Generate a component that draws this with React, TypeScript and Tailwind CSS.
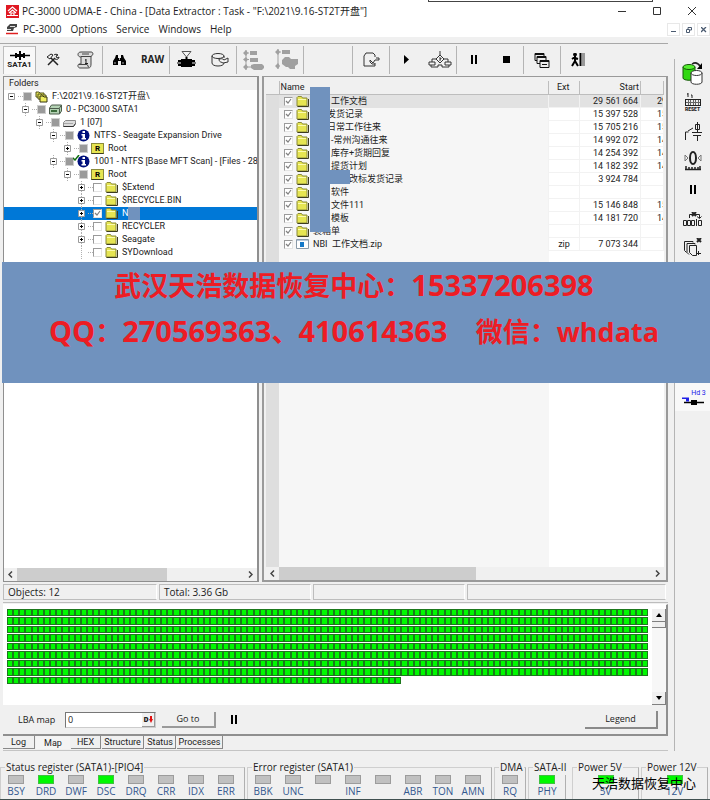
import { ReactNode } from "react"
import clsx from "clsx"

type NodeIcon = "task" | "drive" | "partition" | "info" | "root" | "folder"

type TreeNode = {
  depth: number
  icon: NodeIcon
  label: string
  open?: boolean
  leaf?: boolean
  state: "mixed" | "on" | "off"
  flagged?: boolean
  selected?: boolean
}

const tree: TreeNode[] = [
  { depth: 0, icon: "task", label: "F:\\2021\\9.16-ST2T开盘\\", open: true, state: "mixed" },
  { depth: 1, icon: "drive", label: "0 - PC3000 SATA1", open: true, state: "mixed" },
  { depth: 2, icon: "partition", label: "1 [07]", open: true, state: "mixed" },
  { depth: 3, icon: "info", label: "NTFS - Seagate Expansion Drive", open: true, state: "mixed" },
  { depth: 4, icon: "root", label: "Root", state: "mixed" },
  { depth: 3, icon: "info", label: "1001 - NTFS [Base MFT Scan] - [Files - 2897", open: true, state: "mixed", flagged: true },
  { depth: 4, icon: "root", label: "Root", open: true, state: "mixed" },
  { depth: 5, icon: "folder", label: "$Extend", state: "off" },
  { depth: 5, icon: "folder", label: "$RECYCLE.BIN", state: "off" },
  { depth: 5, icon: "folder", label: "N", state: "on", selected: true },
  { depth: 5, icon: "folder", label: "RECYCLER", state: "off" },
  { depth: 5, icon: "folder", label: "Seagate", state: "off" },
  { depth: 5, icon: "folder", label: "SYDownload", state: "off", leaf: true },
]

const files = [
  { name: "工作文档", indent: "ml-[18px]", ext: "", start: "29 561 664", next: "29" },
  { name: "发货记录", indent: "ml-[14px]", ext: "", start: "15 397 528", next: "15" },
  { name: "日常工作往来", indent: "ml-[14px]", ext: "", start: "15 705 216", next: "15" },
  { name: "-常州沟通往来", indent: "ml-[18px]", ext: "", start: "14 992 072", next: "14" },
  { name: "库存+货期回复", indent: "ml-[18px]", ext: "", start: "14 254 392", next: "14" },
  { name: "提货计划", indent: "ml-[18px]", ext: "", start: "14 182 392", next: "14" },
  { name: "改标发货记录", indent: "ml-9", ext: "", start: "3 924 784", next: "" },
  { name: "软件", indent: "ml-[18px]", ext: "", start: "", next: "" },
  { name: "文件111", indent: "ml-[18px]", ext: "", start: "15 146 848", next: "15" },
  { name: "模板", indent: "ml-[18px]", ext: "", start: "14 181 720", next: "14" },
  { name: "装箱单", indent: "", ext: "", start: "", next: "" },
  { name: "NBI  工作文档.zip", indent: "", ext: "zip", start: "7 073 344", next: "" },
]

const statusBits = [
  { name: "BSY" }, { name: "DRD", on: true }, { name: "DWF" }, { name: "DSC", on: true },
  { name: "DRQ" }, { name: "CRR" }, { name: "IDX" }, { name: "ERR" },
]
const errorBits = [
  { name: "BBK" }, { name: "UNC" }, { name: "" }, { name: "INF" },
  { name: "" }, { name: "ABR" }, { name: "TON" }, { name: "AMN" },
]

const MAP_CELLS = 8 * 104 + 64

/* ---------- small icons ---------- */

const FolderIcon = () => (
  <svg width="13" height="11" viewBox="0 0 13 11" className="shrink-0">
    <path d="M1 3V1.500L2 .5h3.500l1 1.500H11v8H1z" fill="#e6e552" stroke="#8a8a3a" />
    <path d="M1.500 10.500h11V3" fill="none" stroke="#3c3c20" />
    <path d="M2 3.500h8" stroke="#fbfbb0" />
  </svg>
)

const TreeIcon = ({ icon }: { icon: NodeIcon }) => {
  if (icon === "folder") return <FolderIcon />
  if (icon === "task")
    return (
      <svg width="13" height="12" viewBox="0 0 13 12" className="shrink-0">
        <path d="M1 6V1h3l1 1h4v5z" fill="#e6e552" stroke="#555520" />
        <path d="M3 8V3h3l1 1h4v5z" fill="#e6e552" stroke="#555520" />
        <path d="M5 11V5h3l1 1h3v5z" fill="#f0ee60" stroke="#333310" />
      </svg>
    )
  if (icon === "drive")
    return (
      <svg width="13" height="11" viewBox="0 0 13 11" className="shrink-0">
        <path d="M.5 4l2-3h10v6l-2 3H.5z" fill="#b4d2b4" stroke="#4d5d4d" />
        <path d="M.5 4.500h10V10M10.500 4l2-3" fill="none" stroke="#4d5d4d" />
        <path d="M2 7h6" stroke="#3c6c3c" strokeWidth="2" />
      </svg>
    )
  if (icon === "partition")
    return (
      <svg width="13" height="11" viewBox="0 0 13 11" className="shrink-0">
        <path d="M.5 5.500l2-2h10v3l-2 3H.5z" fill="#dcdcdc" stroke="#8a8a8a" />
        <path d="M.5 9.500h10l2-3" fill="none" stroke="#333" />
        <path d="M1 6.500h9" stroke="#a8a8a8" />
      </svg>
    )
  if (icon === "info")
    return (
      <svg width="13" height="13" viewBox="0 0 13 13" className="shrink-0">
        <circle cx="6.500" cy="6.500" r="6" fill="#00107c" />
        <path d="M5.500 2h2.500v2H5.500zM4.500 5H8v4h1v1.500H4.500V9h1V6.500h-1z" fill="#fff" />
      </svg>
    )
  return (
    <span className="flex h-[11px] w-[13px] shrink-0 items-center justify-center border border-[#8a8a3a] border-b-[#3c3c20] bg-[#e6e552] text-[8px] leading-none font-bold text-black">
      R
    </span>
  )
}

const Tick = ({ state, label }: { state: "mixed" | "on" | "off"; label: string }) => (
  <span className="relative flex size-[9px] shrink-0">
    <input
      type="checkbox"
      aria-label={label}
      defaultChecked={state === "on"}
      className={clsx(
        "peer size-[9px] appearance-none border",
        state === "mixed" ? "border-[#cfcfcf] bg-[#9a9a9a]" : "border-r-[#e4e4e4] border-b-[#e4e4e4] border-t-[#9a9a9a] border-l-[#9a9a9a] bg-white",
      )}
    />
    <svg viewBox="0 0 9 9" className="pointer-events-none absolute inset-0 hidden size-[9px] peer-checked:block">
      <path d="M2 4l2 2 3-4" fill="none" stroke="#808080" strokeWidth="1.200" />
    </svg>
  </span>
)

const PauseIcon = () => (
  <svg width="6" height="9" viewBox="0 0 6 9"><path d="M0 0h2v9H0zM4 0h2v9H4z" /></svg>
)

/* ---------- toolbar ---------- */

const ToolButton = ({ label, children, wide }: { label: string; children: ReactNode; wide?: boolean }) => (
  <button aria-label={label} className={clsx("flex h-full items-center justify-center", wide ? "w-9" : "w-[33px]")}>
    {children}
  </button>
)

const ToolGroup = ({ children }: { children?: ReactNode }) => (
  <div className="flex h-7 border-l border-[#b4b4b4]">{children}</div>
)

const Toolbar = () => (
  <div className="mr-[6px] flex h-8 items-center border-t border-[#a8a8a8] pl-[3px]" role="toolbar">
    <button className="flex h-7 w-8 flex-col items-center justify-center border-t border-l border-[#bdbdbd] bg-[#f8f8f8]">
      <svg width="22" height="9" viewBox="0 0 22 9">
        <path d="M1 4.500h20" stroke="#000" strokeWidth="1.500" />
        <path d="M10 0h2v9h-2zM6 2h2v5H6zM14 2h2v5h-2z" />
        <path d="M6 3h10v3H6z" />
      </svg>
      <span className="text-[8px] leading-[9px] font-bold">SATA1</span>
    </button>
    <ToolGroup>
      <ToolButton label="Settings">
        <svg width="14" height="14" viewBox="0 0 14 14" fill="none" stroke="#222" strokeWidth="1.500">
          <path d="M2 12l7-7M12 12L5 5" />
          <path d="M1 4l4-3 2 1-3 4zM8 2c1-1 3-1 4 0l-2 1 1 2 2-1c0 2-2 3-4 2" strokeWidth="1" />
        </svg>
      </ToolButton>
      <ToolButton label="Script">
        <svg width="17" height="18" viewBox="0 0 17 18" fill="#dcdcdc" stroke="#444">
          <path d="M4 1h10c3 0 2 4 0 4v8c0 4-2 4-3 4H3c-2 0-3-3-1-4h2V6C0 6 0 1 4 1z" />
          <path d="M4 5.500h10M2 13.500h8c1 0 1 3 2 3M5 3h7" fill="none" />
          <path d="M9 8v5M8 12.500h3M8 9h1" stroke="#222" fill="none" />
        </svg>
      </ToolButton>
    </ToolGroup>
    <ToolGroup>
      <ToolButton label="Search">
        <svg width="13" height="12" viewBox="0 0 13 12">
          <path d="M3 1h2v3h3V1h2l1 3 2 3v4H8V7H5v4H0V7l2-3z" />
          <path d="M2 8v2M10 8v2M6.500 4v2" stroke="#ddd" strokeWidth=".8" />
        </svg>
      </ToolButton>
      <ToolButton label="Raw recovery">
        <span className="font-['Open_Sans',sans-serif] text-[10px] font-bold">RAW</span>
      </ToolButton>
    </ToolGroup>
    <ToolGroup>
      <ToolButton label="Filter">
        <svg width="19" height="17" viewBox="0 0 19 17">
          <path d="M5 .5h9L9.500 6z" fill="#f4f4f4" stroke="#555" />
          <path d="M9.500 6v3" stroke="#000" strokeWidth="2" />
          <path d="M4 8h11v8H4zM1 9h17v2H1zM1 13h17v2H1z" />
          <path d="M0 12h19" stroke="#000" />
        </svg>
      </ToolButton>
      <ToolButton label="Export">
        <svg width="18" height="15" viewBox="0 0 18 15" fill="none" stroke="#333">
          <path d="M1 4v7c0 4 12 4 12 0M13 6V4" />
          <ellipse cx="7" cy="4" rx="6" ry="2.500" />
          <path d="M8 7c2 0 3-1 5 1l4-2v4l-5 1-2-1c-1 0-2-1-2-3z" fill="#f4f4f4" />
        </svg>
      </ToolButton>
    </ToolGroup>
    <ToolGroup>
      <ToolButton label="Build tree">
        <svg width="22" height="20" viewBox="0 0 22 20" fill="#a0a0a0">
          <path d="M3 0l2 3-2 3-3-3zM3 7l2 2.500L3 12 0 9.500zM3 14l2 3-2 3-3-3z" />
          <path d="M3 0v20M3 3h3M3 9.500h3M3 17h5" stroke="#a0a0a0" />
          <path d="M7 1h7v4H7zM7 8h8v4H7zM8 15l3-1h8l2 2v2l-2 2h-8l-3-2z" />
        </svg>
      </ToolButton>
      <ToolButton label="Stop tree">
        <svg width="24" height="21" viewBox="0 0 24 21" fill="#a0a0a0">
          <path d="M3 0l2 3-2 3-3-3zM3 14l2 3-2 3-3-3z" />
          <path d="M3 0v20M3 3h3" stroke="#a0a0a0" />
          <path d="M7 1h8v4H7zM7 11l3-3h4l2 2h7v5l-3 2v3h-5l-2-2h-2l-4-3z" />
        </svg>
      </ToolButton>
    </ToolGroup>
    <div className="h-7 w-[49px] border-l border-[#b4b4b4]" />
    <ToolGroup>
      <ToolButton label="Save" wide>
        <svg width="17" height="16" viewBox="0 0 17 16" fill="none" stroke="#333">
          <path d="M12 5V3l-2-2H3L1 4v10h11v-3" />
          <path d="M7 8l3 3 2-3h4V6h-3M7 8v2l2 2h3" />
        </svg>
      </ToolButton>
    </ToolGroup>
    <ToolGroup>
      <ToolButton label="Start">
        <svg width="6" height="9" viewBox="0 0 6 9"><path d="M0 0l5 4.500L0 9z" /></svg>
      </ToolButton>
      <ToolButton label="Network">
        <svg width="24" height="17" viewBox="0 0 24 17" fill="#f5f5f5" stroke="#333">
          <path d="M12 0v4M12 4l4 4-4 4-4-4zM8 8H4v3M16 8h4v3" />
          <path d="M1 11h6v3H1zM17 11h6v3h-6zM3 14v2h7v-2h4v2h7v-2" />
          <path d="M11 7h2v1h-1v2" fill="none" />
        </svg>
      </ToolButton>
    </ToolGroup>
    <ToolGroup>
      <ToolButton label="Pause"><PauseIcon /></ToolButton>
      <ToolButton label="Stop"><span className="size-[7px] bg-black" /></ToolButton>
    </ToolGroup>
    <ToolGroup>
      <ToolButton label="Cascade" wide>
        <svg width="16" height="16" viewBox="0 0 16 16" fill="#eee" stroke="#111">
          <path d="M1 1.500h9v7H1z" /><path d="M1 2h9" strokeWidth="2" />
          <path d="M3 4.500h9v7H3z" /><path d="M3 5h9" strokeWidth="2" />
          <path d="M6 8.500h9v7H6z" /><path d="M6 9h9" strokeWidth="2" /><path d="M8 12.500h5" />
        </svg>
      </ToolButton>
    </ToolGroup>
    <ToolGroup>
      <ToolButton label="Exit">
        <svg width="16" height="14" viewBox="0 0 16 14" fill="none" stroke="#000">
          <circle cx="5" cy="1.500" r="1.500" fill="#000" />
          <path d="M5 3v5M5 4L2 6M5 5l3 1M5 8l-3 5M5 8l3 5" strokeWidth="2" />
          <path d="M10.500 0v13" strokeWidth="2" /><path d="M13.500 0v13" stroke="#999" strokeWidth="3" />
        </svg>
      </ToolButton>
    </ToolGroup>
  </div>
)

/* ---------- scrollbars ---------- */

const HScroll = ({ thumb }: { thumb: string }) => (
  <div className="flex h-[13px] shrink-0 items-stretch bg-[#f0f0f0]">
    <button aria-label="Scroll left" className="flex w-[13px] items-center justify-center">
      <svg width="5" height="7" viewBox="0 0 5 7"><path d="M4 .5l-3 3 3 3" fill="none" stroke="#444" strokeWidth="1.500" /></svg>
    </button>
    <div className="flex-1"><div className={clsx("h-full bg-[#cdcdcd]", thumb)} /></div>
    <button aria-label="Scroll right" className="flex w-[13px] items-center justify-center">
      <svg width="5" height="7" viewBox="0 0 5 7"><path d="M1 .5l3 3-3 3" fill="none" stroke="#444" strokeWidth="1.500" /></svg>
    </button>
  </div>
)

/* ---------- panels ---------- */

const TreeRow = ({ node }: { node: TreeNode }) => (
  <li className={clsx("flex h-[13px] items-center whitespace-nowrap", node.selected && "bg-[#0078d7] text-white")}>
    {Array.from({ length: node.depth }, (_, i) => (
      <span key={i} className="w-[14px] shrink-0" />
    ))}
    <span className="relative flex h-full w-[14px] shrink-0 items-center justify-center">
      {node.depth > 0 && <span className="absolute inset-y-0 left-[7px] border-l border-dotted border-[#b0b0b0]" />}
      {!node.leaf && (
        <svg width="7" height="7" viewBox="0 0 7 7" className="relative">
          <path d="M.5.5h6v6h-6z" fill="#fff" stroke="#9a9a9a" />
          <path d={node.open ? "M2 3.500h3" : "M2 3.500h3M3.500 2v3"} stroke="#000" />
        </svg>
      )}
    </span>
    <span className="w-[5px] shrink-0 border-t border-dotted border-[#b0b0b0]" />
    <Tick state={node.state} label={node.label} />
    <span className="relative ml-[3px] flex">
      <TreeIcon icon={node.icon} />
      {node.flagged && (
        <svg width="7" height="6" viewBox="0 0 7 6" className="absolute top-0 -left-1">
          <path d="M0 3l2 2 4-5" fill="none" stroke="#107010" strokeWidth="1.500" />
        </svg>
      )}
    </span>
    <span className="ml-1">{node.label}</span>
    {node.selected && <span className="h-[13px] w-3 bg-[#7092be]" />}
  </li>
)

const FolderPanel = () => (
  <section className="flex w-64 shrink-0 flex-col overflow-hidden border border-r-2 border-[#8f8f8f] bg-white">
    <h2 className="h-[13px] bg-[#f0f0f0] pl-[5px] leading-[13px]">Folders</h2>
    <ul className="flex-1 overflow-hidden">
      {tree.map((node, i) => <TreeRow key={i} node={node} />)}
    </ul>
    <HScroll thumb="w-[66%]" />
  </section>
)

const FilePanel = () => (
  <section className="flex min-w-0 flex-1 flex-col overflow-hidden border-2 border-t border-[#9a9a9a] bg-[#f0f0f0] px-[2px] pt-1">
    <div className="relative min-h-0 flex-1 overflow-hidden">
      <table className="h-full w-full table-fixed border-collapse">
        <colgroup>
          <col className="w-[13px]" />
          <col />
          <col className="w-[31px]" />
          <col className="w-[61px]" />
          <col className="w-[23px]" />
        </colgroup>
        <thead>
          <tr className="h-[13px] bg-[#f0f0f0] text-left leading-[12px] *:border-r *:border-b *:border-[#bdbdbd] *:p-0 *:font-normal">
            <th />
            <th className="pl-px!">Name</th>
            <th className="pl-2!">Ext</th>
            <th className="pr-px! text-right">Start</th>
            <th />
          </tr>
        </thead>
        <tbody>
          {files.map((file, i) => (
            <tr key={file.name} className={clsx("h-[13px] leading-[12px] whitespace-nowrap *:p-0", i === 0 ? "bg-[#e2e2e2]" : "bg-white")}>
              <td className="bg-[#dedede]" />
              <td className={i === 0 ? "bg-[#e2e2e2]" : "bg-[#f6f6f6]"}>
                <div className="flex h-[13px] items-center pl-[5px]">
                  <Tick state="on" label={file.name} />
                  <span className="ml-[3px] flex w-[17px]">
                    {file.ext ? (
                      <svg width="13" height="10" viewBox="0 0 13 10">
                        <path d="M.5.5h12v9H.5z" fill="#fff" stroke="#8a9aa8" />
                        <path d="M1 1h11v1H1z" fill="#b8c8d8" /><path d="M4 3h4v5H4z" fill="#1478c8" />
                      </svg>
                    ) : <FolderIcon />}
                  </span>
                  <span className={clsx("whitespace-pre", file.indent)}>{file.name}</span>
                </div>
              </td>
              <td className="border border-[#f2f2f2] text-center">{file.ext}</td>
              <td className="border border-[#f2f2f2] pr-[2px]! text-right">{file.start}</td>
              <td className="overflow-hidden border border-[#f2f2f2]"><span className="ml-4">{file.next}</span></td>
            </tr>
          ))}
          <tr className="bg-white">
            <td className="bg-[#dedede]" />
            <td className="bg-[#f6f6f6]" />
            <td /><td /><td />
          </tr>
        </tbody>
      </table>
      {/* masked part of the names */}
      <div className="absolute top-[6px] left-11 h-[145px] w-5 bg-[#7092be]" />
      <div className="absolute top-[89px] left-16 h-[14px] w-5 bg-[#7092be]" />
    </div>
    <HScroll thumb="w-[53%]" />
  </section>
)

const MapPanel = () => (
  <section className="border-t border-r-2 border-b-2 border-[#8f8f8f] border-t-white">
    <div className="flex h-[100px] bg-white pt-1 pl-1">
      <div className="mr-1 grid h-[76px] flex-1 grid-cols-[repeat(104,minmax(0,1fr))] grid-rows-9">
        {Array.from({ length: MAP_CELLS }, (_, i) => (
          <span key={i} className="mb-px border border-[#1c781c] bg-[#00f800]" />
        ))}
      </div>
      <div className="flex w-[14px] flex-col bg-[#f7f7f7]">
        <button aria-label="Scroll up" className="flex h-[13px] items-center justify-center border-r border-b border-[#808080] bg-[#f0f0f0]">
          <svg width="6" height="4" viewBox="0 0 6 4"><path d="M0 4l3-4 3 4z" /></svg>
        </button>
        <div className="h-[6px] border-r border-b border-[#808080] bg-[#f0f0f0]" />
        <div className="flex-1" />
        <button aria-label="Scroll down" className="flex h-[13px] items-center justify-center border-r border-b border-[#808080] bg-[#f0f0f0]">
          <svg width="6" height="4" viewBox="0 0 6 4"><path d="M0 0l3 4 3-4z" /></svg>
        </button>
      </div>
    </div>
    <div className="flex h-[29px] items-center pr-2 pl-[15px] font-['Open_Sans',sans-serif]">
      <label htmlFor="lba" className="w-[47px] text-[9px] whitespace-nowrap">LBA map</label>
      <div className="flex h-4 w-[91px] border border-t-[#777] border-r-[#ccc] border-b-[#ccc] border-l-[#777] bg-white">
        <input id="lba" defaultValue="0" className="w-0 flex-1 pl-[2px] text-[9px] leading-none outline-none" />
        <button aria-label="Number base" className="flex w-[13px] items-center justify-center border-r border-b border-[#999] bg-[#f0f0f0] text-[7px] leading-none font-black">
          D
          <svg width="4" height="7" viewBox="0 0 4 7"><path d="M1 0h2v3h1L2 7 0 3h1z" fill="#e01010" /></svg>
        </button>
      </div>
      <button className="ml-[6px] h-4 w-[54px] border-r-2 border-b-2 border-[#9a9a9a] text-[9px] leading-none">Go to</button>
      <button aria-label="Pause map" className="ml-[15px]"><PauseIcon /></button>
      <button className="ml-auto h-[18px] w-[73px] border-r-2 border-b-2 border-[#8a8a8a] text-[9px] leading-none">Legend</button>
    </div>
  </section>
)

const tabs = [
  { name: "Log", width: "w-8" },
  { name: "Map", width: "w-[34px]" },
  { name: "HEX", width: "w-[30px]" },
  { name: "Structure", width: "w-[42px]" },
  { name: "Status", width: "w-[31px]" },
  { name: "Processes", width: "w-[46px]" },
]

const Tabs = () => (
  <div role="tablist" className="flex h-[15px] items-start border-b border-[#c4c4c4]">
    {tabs.map(({ name, width }) => (
      <button
        key={name}
        role="tab"
        aria-selected={name === "Map"}
        className={clsx(
          "mr-px h-[13px] leading-none",
          width,
          name === "Map" ? "bg-[#f4f4f4] pt-[2px]" : "border-r border-b border-[#888]",
        )}
      >
        {name}
      </button>
    ))}
  </div>
)

const Register = ({ title, bits, className }: { title: string; bits: { name: string; on?: boolean }[]; className: string }) => (
  <fieldset className={clsx("h-10 min-w-0 border border-b-0 border-[#cfcfcf] border-r-[#b0b0b0]", className)}>
    <legend className="ml-1 h-4 px-px text-[10px] leading-4 whitespace-nowrap">{title}</legend>
    <div className={clsx("flex", bits.length === 1 && "justify-center")}>
      {bits.map((bit, i) => (
        <div key={i} className="flex w-[30px] shrink-0 flex-col items-center">
          <span className={clsx("h-[9px] w-4 border", bit.on ? "border-[#40c040] bg-[#00f800]" : "border-[#9c9c9c] bg-[#c0c0c0]")} />
          <span className="text-[10px] leading-[14px] text-[#34588f]">{bit.name}</span>
        </div>
      ))}
    </div>
  </fieldset>
)

const sideStroke = { fill: "none", stroke: "#222" }

const SideBar = () => (
  <aside className="flex w-9 shrink-0 flex-col border-l border-[#b4b4b4] *:flex *:h-[29px] *:items-center *:justify-center">
    <button aria-label="Copy drive">
      <svg width="22" height="24" viewBox="0 0 22 24">
        <path d="M1 5v11c0 3 12 3 12 0V5" fill="#30d810" stroke="#155808" />
        <ellipse cx="7" cy="5" rx="6" ry="2.500" fill="#55f030" stroke="#155808" />
        <path d="M9 11v9c0 3 11 3 11 0v-9" fill="#fff" stroke="#333" />
        <ellipse cx="14.500" cy="11" rx="5.500" ry="2.500" fill="#fff" stroke="#333" />
        <path d="M10 2c3-2 6-1 8 2" fill="none" stroke="#222" strokeWidth="1.500" /><path d="M20 1v6h-5z" />
      </svg>
    </button>
    <button aria-label="Reset" className="flex-col">
      <svg width="16" height="13" viewBox="0 0 16 13" {...sideStroke}>
        <path d="M3 0v4M2 1h1M7 2v3M6 2h1M0 6.500h16M0 12.500h16M.5 6v7M15.500 6v7" />
        <path d="M3.500 7v5M5.500 7v5M8.500 7v5M10.500 7v5M13.500 7v5M1 9.500h14" stroke="#666" />
      </svg>
      <span className="text-[5px] leading-[6px] font-black">RESET</span>
    </button>
    <button aria-label="Power circuit">
      <svg width="18" height="19" viewBox="0 0 18 19" {...sideStroke}>
        <path d="M1.500 18v-8h3M4 9l5-3M8 10.500h10M9 13.500h8M13.500 13v6M13.500 10V0M11.500 2.500h4v5h-4z" />
      </svg>
    </button>
    <button aria-label="Head position">
      <svg width="18" height="20" viewBox="0 0 18 20" {...sideStroke}>
        <ellipse cx="9" cy="7" rx="3" ry="6" strokeWidth="2" />
        <path d="M1 4l3 3-3 3zM17 4l-3 3 3 3z" stroke="#777" />
        <path d="M2 15v4M1 18.500h16M5 16v3M8 16v3M11 16v3M14 16v3M16 15v4" strokeWidth="1.500" />
      </svg>
    </button>
    <button aria-label="Pause"><PauseIcon /></button>
    <button aria-label="Skip sectors">
      <svg width="19" height="14" viewBox="0 0 19 14" {...sideStroke}>
        <path d="M6.500 6V2.500h10V6M14 4.500l2.500 2 2-2" />
        <path d="M9 0l4 4M13 0L9 4" strokeWidth="2" />
        <path d="M.5 8.500h3v5h-3zM4.500 8.500h3v5h-3zM8.500 8.500h3v5h-3zM13.500 7v7M15.500 8.500h3v5h-3z" />
      </svg>
    </button>
    <button aria-label="Close copies">
      <svg width="19" height="19" viewBox="0 0 19 19" {...sideStroke}>
        <path d="M10 4.500V3.500H1.500v9l2 2M12 6.500V5.500H4v9l2 2M6.500 7.500h7v10h-4l-3-3zM15.500 13v4M13 15.500h5" />
        <path d="M14 0l4 4M18 0l-4 4" strokeWidth="2" />
      </svg>
    </button>
    <span className="mt-26! h-4!" />
    <button aria-label="Head 3" className="flex-col bg-[#f8f8f8]">
      <span className="ml-3 text-[7px] leading-2 text-[#2020e8]">Hd 3</span>
      <svg width="22" height="8" viewBox="0 0 22 8">
        <path d="M2 5.500h20" stroke="#000" strokeWidth="1.500" /><path d="M9 3h6v5H9z" />
        <path d="M0 .5h7v4H4V2H0z" fill="#2020e8" />
      </svg>
    </button>
  </aside>
)

const Header = () => (
  <header className="bg-white font-['Open_Sans','Noto_Sans_CJK_SC',sans-serif]">
    <div className="flex h-[22px] items-center pl-[6px]">
      <svg width="13" height="13" viewBox="0 0 13 13">
        <path d="M0 0h13v13H0z" fill="#e01822" />
        <path d="M2 6l4.500-4L11 6M3 8l3.500-3L10 8M1 10.500h11M5 10V8h3v2" fill="none" stroke="#fff" strokeWidth="1.200" />
      </svg>
      <h1 className="ml-[3px] text-[10px] whitespace-nowrap">PC-3000 UDMA-E - China - [Data Extractor : Task - "F:\2021\9.16-ST2T开盘"]</h1>
      <div className="ml-auto flex *:flex *:h-5 *:w-[35px] *:items-center *:justify-center">
        <button aria-label="Minimize"><svg width="9" height="9"><path d="M0 4.500h8" stroke="#333" /></svg></button>
        <button aria-label="Maximize"><svg width="9" height="9"><path d="M.5.5h7v7h-7z" fill="none" stroke="#333" /></svg></button>
        <button aria-label="Close"><svg width="9" height="9"><path d="M0 0l8 8M8 0L0 8" stroke="#333" /></svg></button>
      </div>
    </div>
    <nav className="flex h-[15px] items-center pl-[6px] text-[10px]">
      <svg width="12" height="11" viewBox="0 0 12 11">
        <path d="M1 3l3-3h7v3L8 4l-1 3H1z" fill="#444" /><path d="M4 2h5v1H4zM1 5h4v1H1z" fill="#ddd" />
        <path d="M0 9.500h12" stroke="#e02020" strokeWidth="1.500" />
      </svg>
      <div className="ml-[5px] flex gap-[9px]">
        <button>PC-3000</button>
        <button>Options</button>
        <button>Service</button>
        <button>Windows</button>
        <button>Help</button>
      </div>
      <div className="ml-auto flex gap-[2px] text-[#4a5a70] *:flex *:h-[13px] *:w-[13px] *:items-center *:justify-center *:border *:border-[#e8e8e8]">
        <button aria-label="Minimize child"><svg width="6" height="6"><path d="M0 4.500h5" stroke="currentColor" /></svg></button>
        <button aria-label="Restore child"><svg width="6" height="6"><path d="M2 2V.5h3.500V3H4M.5 2.500h3v3h-3z" fill="none" stroke="currentColor" /></svg></button>
        <button aria-label="Close child"><svg width="6" height="6"><path d="M0 0l5 5M5 0L0 5" stroke="currentColor" strokeWidth="1.300" /></svg></button>
      </div>
    </nav>
  </header>
)

const Banner = () => (
  <div className="absolute top-[262px] right-0 left-[2px] h-[121px] bg-[#7092be] pr-1 text-center font-['Open_Sans','Noto_Sans_CJK_SC',sans-serif] text-[27px] leading-[45px] font-bold text-[#ed1c24]">
    <p className="whitespace-nowrap">
      武汉天浩数据恢复中心：<span className="text-[29px]">15337206398</span>
    </p>
    <p className="whitespace-pre">
      <span className="text-[29px]">QQ</span>：<span className="text-[29px]">270569363</span>、<span className="text-[29px]">410614363</span>{"    "}微信：whdata
    </p>
  </div>
)

const App = () => {
  return (
    <div className="relative flex h-screen min-h-[640px] flex-col overflow-hidden border-b border-[#405050] bg-[#f0f0f0] font-['Roboto','Noto_Sans_CJK_SC',sans-serif] text-[9px] text-[#222]">
      <Header />
      <div className="flex min-h-0 flex-1 pt-[6px]">
        <main className="flex min-w-0 flex-1 flex-col">
          <Toolbar />
          <div className="mr-[6px] ml-[3px] flex min-h-0 flex-1 flex-col">
            <div className="flex min-h-0 flex-1 gap-[3px] pt-px">
              <FolderPanel />
              <FilePanel />
            </div>
            <div className="my-[2px] grid h-4 shrink-0 grid-cols-[156px_154px_154px_1fr] font-['Open_Sans',sans-serif] text-[10px] leading-[14px] *:mr-[2px] *:border *:border-[#bdbdbd] *:border-r-white *:pl-1">
              <span>Objects: 12</span>
              <span>Total: 3.36 Gb</span>
              <span />
              <span />
            </div>
            <div className="h-[2px] shrink-0 border-t border-[#bdbdbd]" />
            <MapPanel />
            <Tabs />
          </div>
        </main>
        <div className="flex pt-4">
          <SideBar />
        </div>
      </div>
      <footer className="mt-2 flex shrink-0 gap-[2px] font-['Open_Sans',sans-serif]">
        <Register title="Status register (SATA1)-[PIO4]" bits={statusBits} className="w-[245px]" />
        <Register title="Error register (SATA1)" bits={errorBits} className="w-[245px]" />
        <Register title="DMA" bits={[{ name: "RQ" }]} className="w-8" />
        <Register title="SATA-II" bits={[{ name: "PHY", on: true }]} className="mr-1 w-[38px]" />
        <Register title="Power 5V" bits={[{ name: "5V", on: true }]} className="w-[67px]" />
        <Register title="Power 12V" bits={[{ name: "12V", on: true }]} className="w-[67px]" />
      </footer>

      <div className="absolute top-0 right-[57px] h-[2px] w-[225px] border border-t-0 border-[#444]" />
      <Banner />
      <p className="absolute right-[14px] bottom-[6px] font-['Noto_Sans_CJK_SC',sans-serif] text-[13px] leading-5 text-black">天浩数据恢复中心</p>
    </div>
  )
}

export default App
